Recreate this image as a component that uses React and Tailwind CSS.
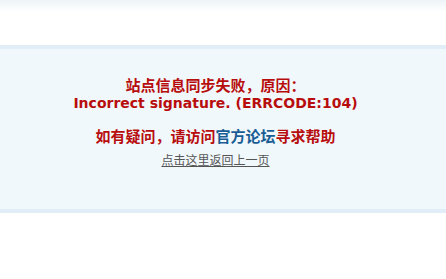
export default function App() {
  const font = { fontFamily: '"DejaVu Sans", Verdana, "Noto Sans CJK SC", sans-serif' };
  return (
    <div className="w-[446px] h-[279px] bg-white overflow-hidden" style={font}>
      <div className="h-[12px] bg-gradient-to-b from-[#eef4f8] to-white" />
      <div className="h-[33px]" />
      <div className="border-t-4 border-b-4 border-[#e1edf7] bg-[#f1f8fc] h-[168px] flex flex-col items-center pr-[15px]">
        <div className="mt-[29px] text-[14px] leading-[16.5px] font-bold text-[#b80d0d] text-center">
          <div className="text-[15px]">站点信息同步失败，原因：</div>
          <div>Incorrect signature. (ERRCODE:104)</div>
        </div>
        <div className="mt-[17px] text-[15px] leading-[18px] font-bold text-[#b80d0d]">
          如有疑问，请访问<a className="text-[#1a5d95]">官方论坛</a>寻求帮助
        </div>
        <a className="mt-[7px] text-[12px] leading-[16px] text-[#555555] underline">点击这里返回上一页</a>
      </div>
    </div>
  );
}
